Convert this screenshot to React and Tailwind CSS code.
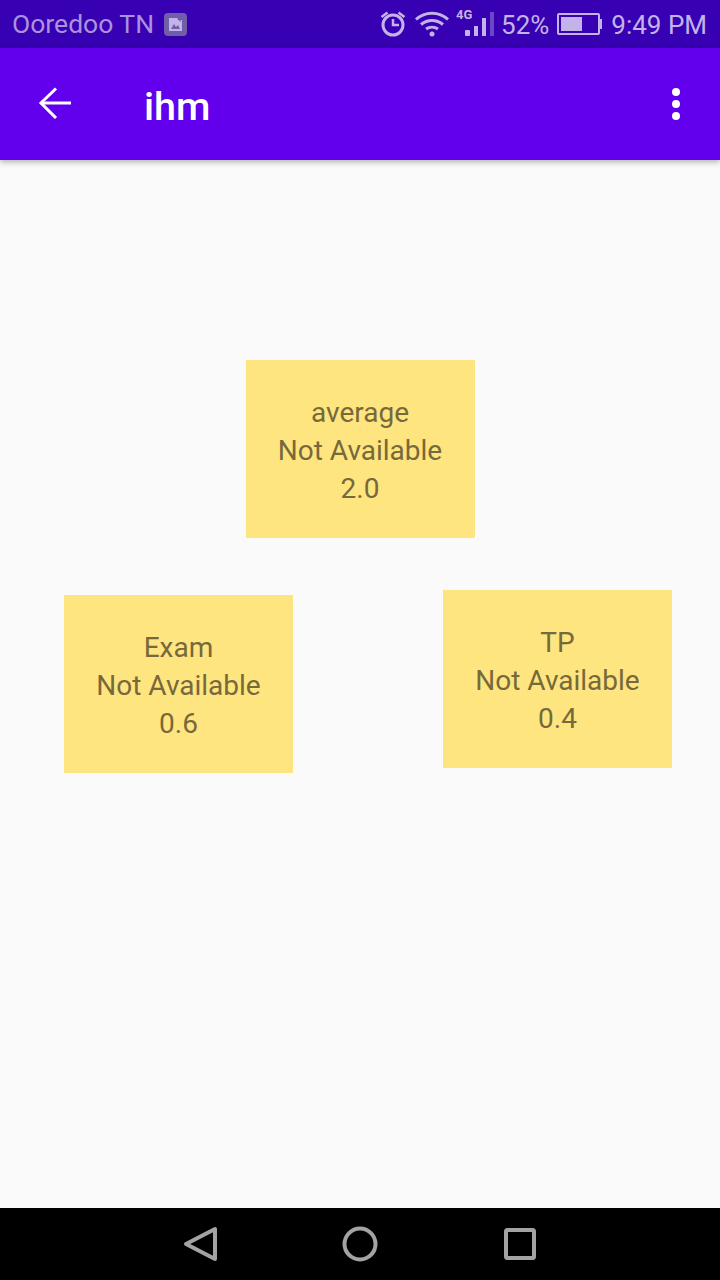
import React from 'react';

const roboto = { fontFamily: 'Roboto, sans-serif' };

const NoteCard = ({ title, value, className = '' }) => (
  <div className={`w-[229px] h-[178px] pt-1 bg-[#ffe57f] flex flex-col items-center justify-center text-[28px] leading-[38px] text-[#76693b] ${className}`}>
    <span>{title}</span>
    <span>Not Available</span>
    <span>{value}</span>
  </div>
);

const StatusBar = () => (
  <div className="h-12 bg-[#3700b3] flex items-center pl-3 pr-[13px] pt-[1px] text-[#c4b3e8] text-[26px] leading-none">
    <span className="text-[26.5px] text-[#ab93dc]">Ooredoo TN</span>
    <svg className="ml-[10px] mt-[-1px]" width="23" height="23" viewBox="0 0 23 23">
      <rect width="23" height="23" rx="4" fill="#6f5fa8" />
      <path d="M5 5h9v2h4v11H5z" fill="#c4b3e8" />
      <path d="M7 16l3-5 2 3 2-2 2 4z" fill="#6f5fa8" />
      <path d="M16 3.500v5M13.500 6h5" stroke="#6f5fa8" strokeWidth="1.500" />
    </svg>
    <div className="flex-1" />
    <svg className="mt-[-1px]" width="26" height="28" viewBox="0 0 26 28" fill="none" stroke="#c4b3e8">
      <circle cx="13" cy="15" r="10" strokeWidth="3" />
      <path d="M13 9v6h6" strokeWidth="2.500" />
      <path d="M1.500 7l6-4.500M24.500 7l-6-4.500" strokeWidth="2.500" />
    </svg>
    <svg className="ml-[9px] mt-[-1px]" width="34" height="26" viewBox="0 0 34 26" fill="none" stroke="#c4b3e8" strokeWidth="3">
      <path d="M1 8.500C10 0 24 0 33 8.500" />
      <path d="M6 13.500C12.500 8 21.500 8 28 13.500" />
      <path d="M11 18C14.500 15.500 19.500 15.500 23 18" />
      <circle cx="17" cy="23" r="2.500" fill="#c4b3e8" stroke="none" />
    </svg>
    <div className="relative ml-[7px] w-[38px] h-[28px] mt-[-5px]">
      <span className="absolute left-0 top-0 text-[13px] leading-[14px] font-bold" style={roboto}>4G</span>
      <div className="absolute left-[9px] bottom-0 flex items-end gap-[4px]">
        <div className="w-[5px] h-[6px] bg-[#c4b3e8] rounded-[1px]" />
        <div className="w-[4px] h-[10px] bg-[#c4b3e8]" />
        <div className="w-[4px] h-[18px] bg-[#c4b3e8]" />
        <div className="w-[4px] h-[24px] bg-[#6b47c4]" />
      </div>
    </div>
    <span className="ml-[7px]">52%</span>
    <div className="ml-[8px] mt-[-1px] flex items-center">
      <div className="w-[43px] h-[22px] border-2 border-[#c4b3e8] rounded-[2px] p-[2px]">
        <div className="w-[21px] h-full bg-[#c4b3e8]" />
      </div>
      <div className="w-[2px] h-[10px] bg-[#c4b3e8]" />
    </div>
    <span className="ml-[9px]">9:49 PM</span>
  </div>
);

const AppBar = () => (
  <div className="relative z-10 h-28 bg-[#6200ee] flex items-center shadow-[0_2px_6px_rgba(0,0,0,0.3)] text-white">
    <svg className="ml-[38px] mt-[-3px]" width="33" height="32" viewBox="0 0 33 32" fill="none" stroke="white" strokeWidth="3">
      <path d="M33 16H3" />
      <path d="M18 1.500L3 16l15 15" />
    </svg>
    <span className="ml-[73px] pt-[5px] text-[39.5px] leading-none font-medium">ihm</span>
    <div className="flex-1" />
    <div className="mr-10 mt-[-1px] flex flex-col gap-[4px]">
      <div className="w-2 h-2 rounded-full bg-white" />
      <div className="w-2 h-2 rounded-full bg-white" />
      <div className="w-2 h-2 rounded-full bg-white" />
    </div>
  </div>
);

const NavBar = () => (
  <div className="h-[72px] bg-black flex items-center justify-center gap-[112px]">
    <svg width="48" height="48" viewBox="0 0 48 48" fill="none" stroke="#a3a3a3" strokeWidth="4" strokeLinejoin="round">
      <path d="M39 9v30L10 24z" />
    </svg>
    <svg width="48" height="48" viewBox="0 0 48 48" fill="none" stroke="#a3a3a3" strokeWidth="4">
      <circle cx="24" cy="24" r="15.500" />
    </svg>
    <svg width="48" height="48" viewBox="0 0 48 48" fill="none" stroke="#a3a3a3" strokeWidth="4" strokeLinejoin="round">
      <rect x="10" y="10" width="28" height="28" rx="1.500" />
    </svg>
  </div>
);

export default function App() {
  return (
    <div className="w-[720px] h-[1280px] flex flex-col bg-[#fafafa] overflow-hidden" style={roboto}>
      <StatusBar />
      <AppBar />
      <main className="flex-1 pt-[200px]">
        <div className="flex justify-center">
          <NoteCard title="average" value="2.0" />
        </div>
        <div className="mt-[52px] flex items-start justify-between pl-16 pr-12">
          <NoteCard title="Exam" value="0.6" className="mt-[5px]" />
          <NoteCard title="TP" value="0.4" />
        </div>
      </main>
      <NavBar />
    </div>
  );
}
